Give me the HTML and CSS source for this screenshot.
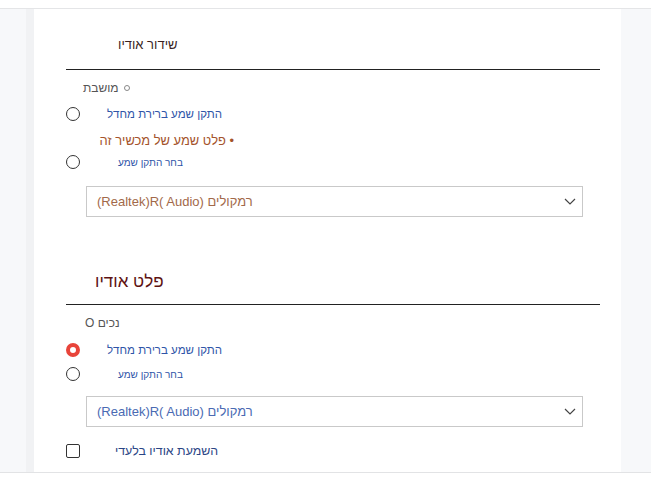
FILE: index.html
```html
<!DOCTYPE html>
<html lang="he">
<head>
<meta charset="utf-8">
<link rel="stylesheet" href="styles.css">
</head>
<body>
<div class="topbar"></div>
<div class="main">
  <div class="side-l"></div>
  <div class="side-strip"></div>
  <div class="panel">
    <div class="sec-head sec-head1"><h2 class="title1" dir="rtl">שידור אודיו</h2></div>
    <div class="row status-row"><span class="status" dir="rtl"><span class="dot"></span>מושבת</span></div>
    <div class="row radio-row r1"><span class="radio"></span><span class="rlabel lab-a" dir="rtl">התקן שמע ברירת מחדל</span></div>
    <div class="row bullet-row"><span class="bullet" dir="rtl">• פלט שמע של מכשיר זה</span></div>
    <div class="row radio-row r2"><span class="radio"></span><span class="rlabel lab-b" dir="rtl">בחר התקן שמע</span></div>
    <div class="select sel1"><span class="sel-text brown" dir="ltr">(Realtek)R( Audio) רמקולים</span>
      <svg class="chev" width="12" height="7" viewBox="0 0 12 7"><polyline points="1,1 6,6 11,1" fill="none" stroke="#444" stroke-width="1.2"/></svg>
    </div>

    <div class="sec-head sec-head2"><h2 class="title2" dir="rtl">פלט אודיו</h2></div>
    <div class="row status-row2"><span class="status2" dir="rtl">נכים O</span></div>
    <div class="row radio-row r3"><span class="radio on"></span><span class="rlabel lab-a" dir="rtl">התקן שמע ברירת מחדל</span></div>
    <div class="row radio-row r4"><span class="radio"></span><span class="rlabel lab-b" dir="rtl">בחר התקן שמע</span></div>
    <div class="select sel2"><span class="sel-text blue" dir="ltr">(Realtek)R( Audio) רמקולים</span>
      <svg class="chev" width="12" height="7" viewBox="0 0 12 7"><polyline points="1,1 6,6 11,1" fill="none" stroke="#444" stroke-width="1.2"/></svg>
    </div>
    <div class="row check-row"><span class="check"></span><span class="clabel" dir="rtl">השמעת אודיו בלעדי</span></div>
  </div>
  <div class="side-r"></div>
</div>
<div class="bottombar"></div>
</body>
</html>
```
FILE: styles.css
```css
* { box-sizing: border-box; }
html, body { margin: 0; padding: 0; background: #fff; }
body { font-family: "Liberation Sans", "DejaVu Sans", Arial, sans-serif; width: 651px; height: 485px; overflow: hidden; }

.topbar { height: 9px; border-bottom: 1px solid #e4e5e7; background: #fff; }
.main { display: grid; grid-template-columns: 26px 8px 587px 30px; height: 463px; overflow: hidden; }
.side-l { background: #f7f8fa; }
.side-strip { background: #f1f2f4; }
.side-r { background: #f7f8fa; }
.panel { background: #fff; padding: 0 21px 0 32px; }
.bottombar { border-top: 1px solid #e2e3e5; height: 13px; background: #fff; }

h2 { margin: 0; font-weight: normal; }
.sec-head { border-bottom: 1px solid #222; }
.sec-head1 { height: 61px; padding-top: 26px; }
.title1 { font-size: 13px; line-height: 18px; color: #3a1f1f; margin-left: 52px; display: inline-block; }
.sec-head2 { height: 88px; padding-top: 54px; }
.title2 { font-size: 17px; line-height: 22px; color: #5e1212; margin-left: 29px; display: inline-block; }

.row { display: flex; align-items: center; }
.status-row { height: 18px; margin-top: 9px; padding-left: 17px; }
.status { font-size: 12px; color: #555; display: inline-flex; align-items: center; }
.dot { width: 6px; height: 6px; border: 1px solid #888; border-radius: 50%; margin-left: 5px; }

.radio-row { height: 20px; }
.r1 { margin-top: 7px; }
.r2 { margin-top: 2px; }
.r3 { margin-top: 8px; }
.r4 { margin-top: 4px; }
.radio { width: 14px; height: 14px; border: 1.3px solid #333; border-radius: 50%; flex: none; }
.radio.on { border: 4px solid #e8443a; }
.rlabel { color: #2f55a8; }
.lab-a { margin-left: 27px; font-size: 11.5px; }
.lab-b { margin-left: 38px; font-size: 10px; }

.bullet-row { height: 20px; margin-top: 6px; padding-left: 29px; }
.bullet { display: inline-block; width: 139px; text-align: right; white-space: nowrap; font-size: 12.9px; color: #a4532b; }

.select { display: flex; align-items: center; justify-content: space-between; margin-left: 20px; width: 497px; height: 31px; border: 1px solid #c9c9c9; padding: 0 6px 0 10px; }
.sel1 { margin-top: 14px; }
.sel2 { margin-top: 12px; }
.sel-text { font-size: 13px; }
.brown { color: #a2694a; }
.blue { color: #4a6ab3; }
.chev { display: block; }

.status-row2 { height: 18px; margin-top: 9px; padding-left: 19px; }
.status2 { font-size: 12px; color: #555; }

.check-row { height: 20px; margin-top: 14px; }
.check { width: 14px; height: 14px; border: 1.3px solid #333; border-radius: 2px; flex: none; }
.clabel { margin-left: 35px; font-size: 12.4px; color: #2b4585; }
```
